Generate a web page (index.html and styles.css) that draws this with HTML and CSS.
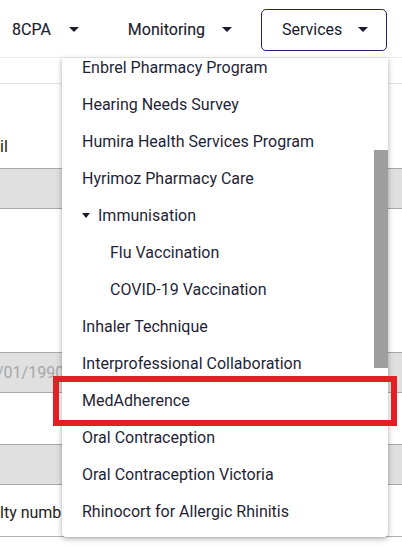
FILE: index.html
```html
<!DOCTYPE html>
<html>
<head>
<meta charset="utf-8">
<link rel="stylesheet" href="styles.css">
</head>
<body>
<div class="page">
  <nav class="nav">
    <div class="nav-item nav-first">8CPA <span class="caret"></span></div>
    <div class="nav-item nav-mon">Monitoring <span class="caret"></span></div>
    <div class="nav-btn">Services <span class="caret"></span></div>
  </nav>
  <div class="content">
    <div class="row r1"></div>
    <div class="row r2"><span class="cut">il</span></div>
    <div class="band"></div>
    <div class="row r3"></div>
    <div class="band"><span class="cut muted">/01/1990</span></div>
    <div class="row r4"></div>
    <div class="band"></div>
    <div class="row r5"><span class="cut">lty numb</span></div>
  </div>

  <div class="menu">
    <ul class="menu-list">
      <li class="mi">Enbrel Pharmacy Program</li>
      <li class="mi">Hearing Needs Survey</li>
      <li class="mi">Humira Health Services Program</li>
      <li class="mi">Hyrimoz Pharmacy Care</li>
      <li class="mi group"><span class="caret small"></span>Immunisation</li>
      <li class="mi sub">Flu Vaccination</li>
      <li class="mi sub">COVID-19 Vaccination</li>
      <li class="mi">Inhaler Technique</li>
      <li class="mi">Interprofessional Collaboration</li>
      <li class="mi">MedAdherence</li>
      <li class="mi">Oral Contraception</li>
      <li class="mi">Oral Contraception Victoria</li>
      <li class="mi">Rhinocort for Allergic Rhinitis</li>
    </ul>
    <div class="thumb"></div>
  </div>
  <div class="highlight"></div>
</div>
</body>
</html>
```

FILE: styles.css
```css
* { box-sizing: border-box; }
html, body { margin: 0; padding: 0; }
body {
  font-family: Roboto, "Noto Sans", sans-serif;
  background: #ffffff;
  color: #1f1f35;
  width: 402px;
  height: 547px;
  overflow: hidden;
}
.page {
  position: relative;
  width: 402px;
  height: 547px;
  overflow: hidden;
}
.nav {
  height: 58px;
  display: flex;
  align-items: center;
  border-bottom: 1px solid #ececec;
  font-size: 16px;
  font-weight: 400;
  color: #1c1c30;
}
.nav-item {
  display: flex;
  align-items: center;
  margin-top: 2px;
  -webkit-text-stroke: 0.15px #1c1c30;
}
.nav-first { margin-left: 12px; }
.nav-mon { margin-left: 49px; }
.nav-first .caret { margin-left: 18px; }
.nav-mon .caret { margin-left: 17px; }
.nav-btn {
  margin-left: 29px;
  width: 126px;
  height: 42px;
  margin-top: 2px;
  border: 1.5px solid #23226a;
  border-radius: 5px;
  display: flex;
  align-items: center;
  padding-left: 20px;
  font-weight: 400;
  color: #1a1a2e;
}
.nav-btn .caret { margin-left: 16px; }
.caret {
  display: inline-block;
  width: 0;
  height: 0;
  border-left: 5px solid transparent;
  border-right: 5px solid transparent;
  border-top: 5px solid #1c1c30;
}
.caret.small {
  border-left-width: 4.5px;
  border-right-width: 4.5px;
  border-top-width: 5px;
  margin-right: 8px;
  margin-left: 0;
}
.content { font-size: 16px; color: #222; }
.row { position: relative; }
.r1 { height: 26px; border-bottom: 1px solid #e2e2e2; }
.r2 { height: 84px; display: flex; align-items: flex-end; padding-bottom: 12px; }
.band {
  height: 41px;
  background: #e0e0e0;
  border-top: 1px solid #a8a8a8;
  border-bottom: 1px solid #a8a8a8;
  display: flex;
  align-items: center;
}
.r3 { height: 143px; }
.r4 { height: 51px; }
.r5 { height: 52px; border-bottom: 1px solid #b0b0b0; display: flex; align-items: center; padding-top: 4px; }
.cut { display: block; }
.muted { color: #a6a6a6; margin-left: -3px; font-size: 16px; }

.menu {
  position: absolute;
  left: 62px;
  top: 58px;
  width: 326px;
  height: 479px;
  background: #fff;
  box-shadow: 0 2px 6px rgba(0,0,0,0.28), 0 1px 2px rgba(0,0,0,0.12);
  border-radius: 0 0 4px 4px;
  overflow: hidden;
}
.menu-list {
  list-style: none;
  margin: -9.5px 0 0 0;
  padding: 0;
}
.mi {
  height: 37px;
  display: flex;
  align-items: center;
  padding-left: 20px;
  font-size: 16px;
  color: #1f1f38;
  white-space: nowrap;
}
.mi.sub { padding-left: 48px; }
.thumb {
  position: absolute;
  right: 0;
  top: 92px;
  width: 14px;
  height: 218px;
  background: #9e9e9e;
}
.highlight {
  position: absolute;
  left: 53px;
  top: 376px;
  width: 344px;
  height: 50px;
  border: 6px solid #e41e25;
}
```
